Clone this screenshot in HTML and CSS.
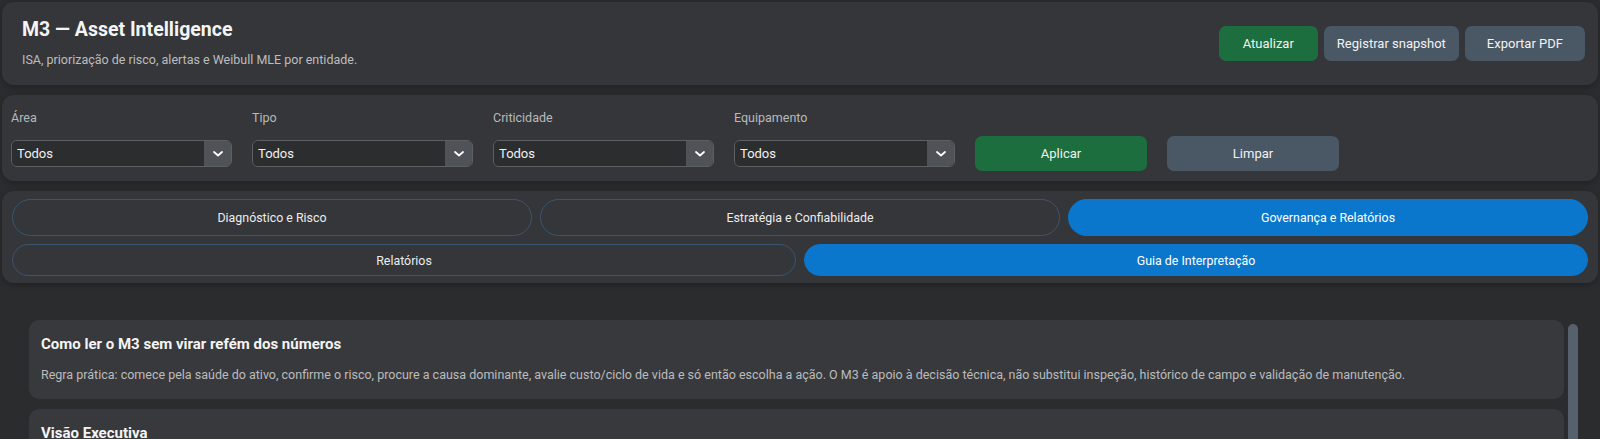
FILE: index.html
```html
<!DOCTYPE html>
<html lang="pt-BR">
<head>
    <meta charset="UTF-8">
    <title>M3 — Asset Intelligence</title>
    <link rel="stylesheet" href="styles.css">
</head>
<body>
    <div class="app">
        <header class="card header">
            <div class="header-text">
                <h1 class="title">M3 — Asset Intelligence</h1>
                <p class="subtitle">ISA, priorização de risco, alertas e Weibull MLE por entidade.</p>
            </div>
            <div class="header-actions">
                <button class="btn btn-green btn-refresh">Atualizar</button>
                <button class="btn btn-gray btn-snap">Registrar snapshot</button>
                <button class="btn btn-gray btn-export">Exportar PDF</button>
            </div>
        </header>

        <section class="card filters">
            <div class="field">
                <label class="field-label">Área</label>
                <div class="select">
                    <select class="select-input"><option>Todos</option></select>
                    <span class="select-arrow"><svg width="10" height="6" viewBox="0 0 10 6"><path d="M1 1l4 3.5L9 1" fill="none" stroke="#fff" stroke-width="1.8" stroke-linecap="round" stroke-linejoin="round"/></svg></span>
                </div>
            </div>
            <div class="field">
                <label class="field-label">Tipo</label>
                <div class="select">
                    <select class="select-input"><option>Todos</option></select>
                    <span class="select-arrow"><svg width="10" height="6" viewBox="0 0 10 6"><path d="M1 1l4 3.5L9 1" fill="none" stroke="#fff" stroke-width="1.8" stroke-linecap="round" stroke-linejoin="round"/></svg></span>
                </div>
            </div>
            <div class="field">
                <label class="field-label">Criticidade</label>
                <div class="select">
                    <select class="select-input"><option>Todos</option></select>
                    <span class="select-arrow"><svg width="10" height="6" viewBox="0 0 10 6"><path d="M1 1l4 3.5L9 1" fill="none" stroke="#fff" stroke-width="1.8" stroke-linecap="round" stroke-linejoin="round"/></svg></span>
                </div>
            </div>
            <div class="field">
                <label class="field-label">Equipamento</label>
                <div class="select">
                    <select class="select-input"><option>Todos</option></select>
                    <span class="select-arrow"><svg width="10" height="6" viewBox="0 0 10 6"><path d="M1 1l4 3.5L9 1" fill="none" stroke="#fff" stroke-width="1.8" stroke-linecap="round" stroke-linejoin="round"/></svg></span>
                </div>
            </div>
            <button class="btn btn-green">Aplicar</button>
            <button class="btn btn-gray">Limpar</button>
        </section>

        <nav class="card tabs">
            <div class="tab-row tab-row-main">
                <button class="tab">Diagnóstico e Risco</button>
                <button class="tab">Estratégia e Confiabilidade</button>
                <button class="tab active">Governança e Relatórios</button>
            </div>
            <div class="tab-row tab-row-sub">
                <button class="tab">Relatórios</button>
                <button class="tab active">Guia de Interpretação</button>
            </div>
        </nav>

        <div class="content">
            <main class="scroll-area">
                <div class="guide-card">
                    <h2 class="guide-title">Como ler o M3 sem virar refém dos números</h2>
                    <p class="guide-text">Regra prática: comece pela saúde do ativo, confirme o risco, procure a causa dominante, avalie custo/ciclo de vida e só então escolha a ação. O M3 é apoio à decisão técnica, não substitui inspeção, histórico de campo e validação de manutenção.</p>
                </div>
                <div class="guide-card">
                    <h2 class="guide-title">Visão Executiva</h2>
                    <p class="guide-text">Mostra o retrato consolidado da carteira: ISA médio, quantidade de ativos em risco alto, alertas abertos e tendência em relação ao último snapshot registrado.</p>
                </div>
                <div class="guide-card">
                    <h2 class="guide-title">ISA — Índice de Saúde do Ativo</h2>
                    <p class="guide-text">Valores próximos de 100 indicam ativo saudável. Quedas bruscas entre snapshots merecem mais atenção que um valor baixo estável.</p>
                </div>
                <div class="guide-card">
                    <h2 class="guide-title">Priorização de risco</h2>
                    <p class="guide-text">Combina probabilidade de falha e consequência. Use a criticidade do equipamento para desempatar ativos com risco semelhante.</p>
                </div>
            </main>
            <div class="scrollbar"><div class="scrollbar-thumb"></div></div>
        </div>
    </div>
</body>
</html>
```

FILE: styles.css
```css
* {
    margin: 0;
    padding: 0;
    box-sizing: border-box;
}

body {
    background-color: #2b2c2e;
    font-family: Roboto, 'Noto Sans', sans-serif;
    color: #f1f1f1;
    overflow: hidden;
}

.app {
    display: flex;
    flex-direction: column;
    gap: 10px;
    padding: 2px;
}

.card {
    background-color: #343639;
    border-radius: 12px;
    box-shadow: 0 2px 6px rgba(0, 0, 0, 0.25);
}

/* header */
.header {
    display: flex;
    justify-content: space-between;
    align-items: center;
    padding: 17px 13px 17px 20px;
}

.title {
    font-size: 19.5px;
    line-height: 22px;
    font-weight: 700;
    color: #f4f4f4;
}

.subtitle {
    margin-top: 11px;
    font-size: 12.5px;
    line-height: 16px;
    color: #bdbdbd;
}

.header-actions {
    display: flex;
    gap: 6px;
}

.btn {
    height: 35px;
    border: none;
    border-radius: 7px;
    font-family: inherit;
    font-size: 13px;
    color: #f2f2f2;
    cursor: pointer;
}

.btn-refresh {
    padding: 0 24px;
}

.btn-snap {
    padding: 0 13px;
}

.btn-export {
    padding: 0 22px;
}

.btn-green {
    background-color: #1c6e3e;
}

.btn-gray {
    background-color: #4a5866;
}

/* filters */
.filters {
    display: grid;
    grid-template-columns: repeat(4, 221px) 172px 172px;
    column-gap: 20px;
    align-items: end;
    padding: 15px 10px 10px 9px;
}

.field {
    display: flex;
    flex-direction: column;
    gap: 14px;
    padding-bottom: 4px;
}

.field-label {
    font-size: 12.5px;
    line-height: 16px;
    color: #b9b9b9;
}

.select {
    display: flex;
    height: 27px;
    border: 1px solid #5c5f63;
    border-radius: 6px;
    overflow: hidden;
}

.select-input {
    flex: 1;
    appearance: none;
    -webkit-appearance: none;
    border: none;
    outline: none;
    background-color: #2c2d2f;
    color: #f0f0f0;
    font-family: inherit;
    font-size: 13px;
    padding: 0 5px;
}

.select-arrow {
    width: 27px;
    display: flex;
    align-items: center;
    justify-content: center;
    background-color: #4f5256;
}

/* tabs */
.tabs {
    display: flex;
    flex-direction: column;
    gap: 8px;
    padding: 8px 10px 7px;
}

.tab-row {
    display: grid;
    gap: 8px;
}

.tab-row-main {
    grid-template-columns: repeat(3, 1fr);
}

.tab-row-main .tab {
    height: 37px;
}

.tab-row-sub {
    grid-template-columns: repeat(2, 1fr);
}

.tab-row-sub .tab {
    height: 32px;
}

.tab {
    border: 1px solid #3b5571;
    border-radius: 20px;
    background-color: transparent;
    font-family: inherit;
    font-size: 12.4px;
    color: #ececec;
    cursor: pointer;
}

.tab.active {
    background-color: #0a77cc;
    border-color: #0a77cc;
    color: #fff;
}

/* guide content */
.content {
    display: flex;
    gap: 4px;
    height: 640px;
    margin: 27px 20px 0 27px;
}

.scroll-area {
    flex: 1;
    display: flex;
    flex-direction: column;
    gap: 10px;
    overflow: hidden;
}

.scrollbar {
    width: 10px;
    padding-top: 4px;
}

.scrollbar-thumb {
    height: 260px;
    background-color: #56616d;
    border-radius: 5px;
}

.guide-card {
    flex-shrink: 0;
    background-color: #37393c;
    border-radius: 10px;
    padding: 14px 12px 16px;
}

.guide-title {
    font-size: 15px;
    line-height: 20px;
    font-weight: 700;
    color: #f4f4f4;
}

.guide-text {
    margin-top: 13px;
    font-size: 12.5px;
    line-height: 16px;
    color: #bcbcbc;
}
```
